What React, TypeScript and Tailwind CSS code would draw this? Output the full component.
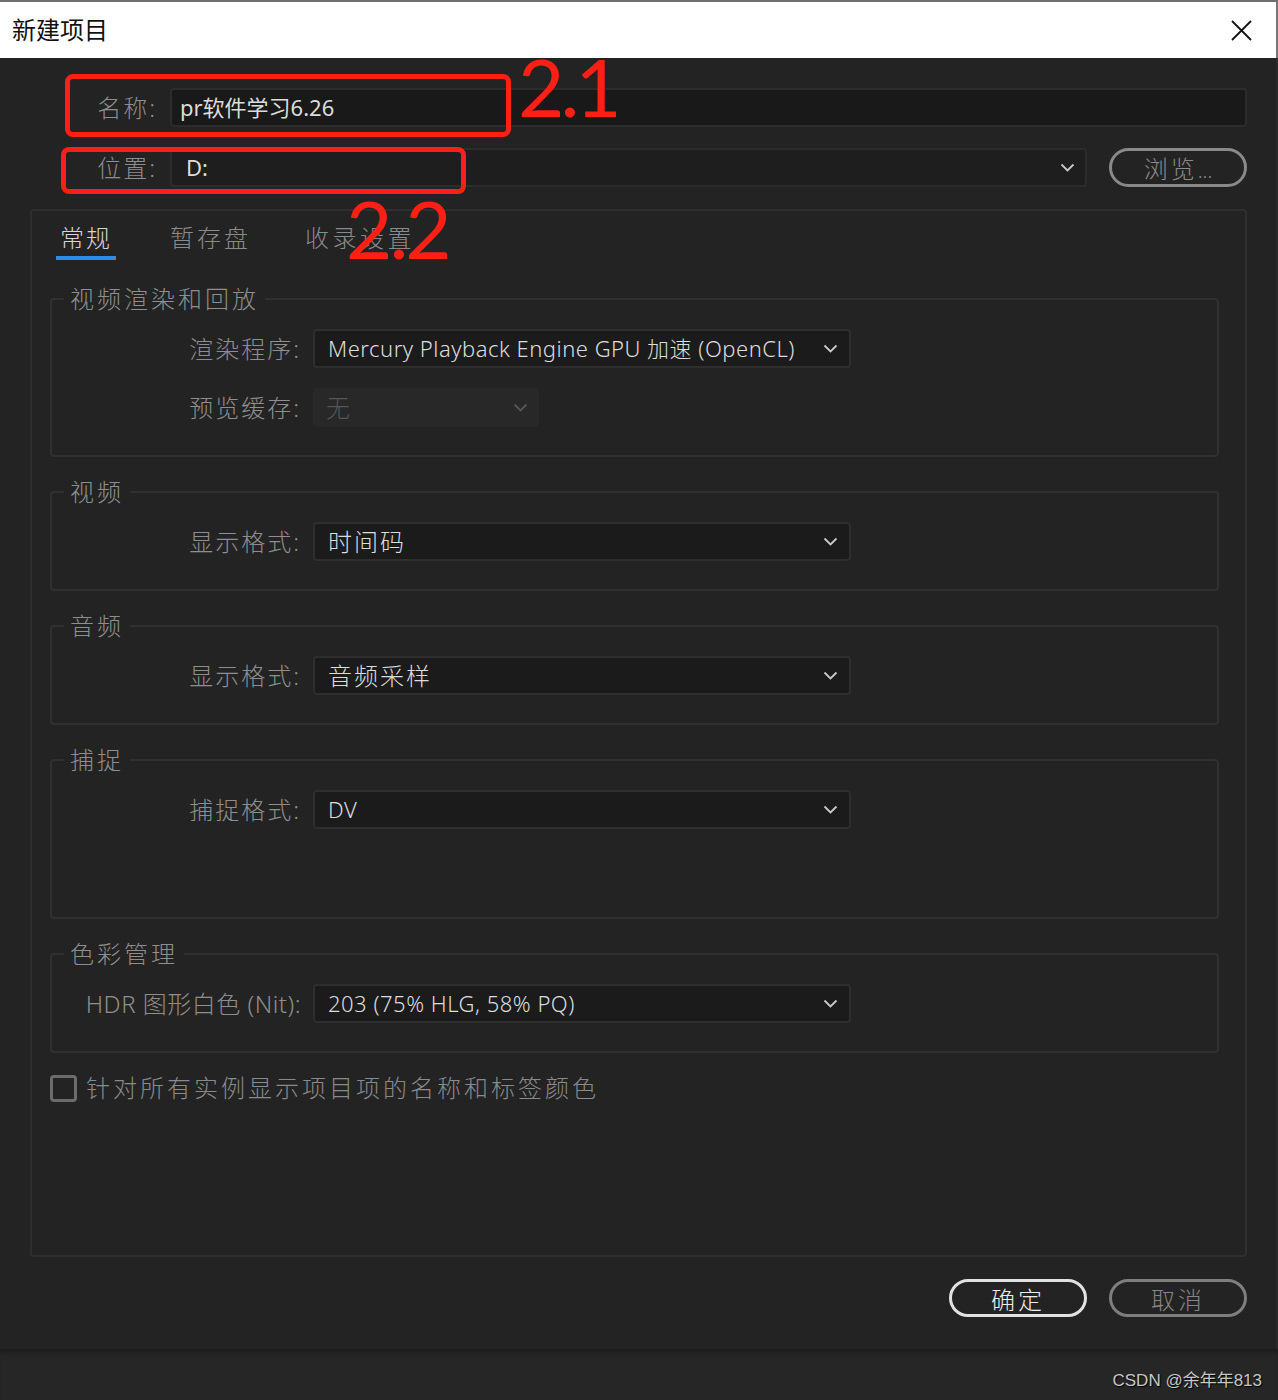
import React from "react";

const Chevron = ({ color = "#c9c9c9" }: { color?: string }) => (
  <svg width="15" height="9" viewBox="0 0 15 9" className="shrink-0">
    <path d="M1.5 1.5l6 6 6-6" fill="none" stroke={color} strokeWidth="1.8" />
  </svg>
);

const Select = ({
  value,
  disabled = false,
  latin = false,
  className = "w-[538px]",
}: {
  value: string;
  disabled?: boolean;
  latin?: boolean;
  className?: string;
}) => (
  <div
    className={`flex h-[39px] items-center justify-between rounded-[4px] pl-[13px] pr-[11px] ${className} ${
      disabled
        ? "bg-[#282828] text-[#555555]"
        : "border-2 border-[#2e2e2e] bg-[#1b1b1b] text-[#dcdcdc]"
    }`}
  >
    <span
      className={`whitespace-nowrap ${
        latin ? "text-[22px] tracking-[0.5px]" : "text-[24px] tracking-[2px]"
      }`}
    >
      {value}
    </span>
    <Chevron color={disabled ? "#555555" : "#c9c9c9"} />
  </div>
);

const Row = ({
  label,
  tight = false,
  children,
}: {
  label: string;
  tight?: boolean;
  children: React.ReactNode;
}) => (
  <div className="flex items-center">
    <div
      className={`w-[249px] whitespace-nowrap text-right text-[24px] text-[#8e8e8e] ${
        tight ? "tracking-[0.5px]" : "tracking-[2px]"
      }`}
    >
      {label}
    </div>
    <div className="ml-[12px]">{children}</div>
  </div>
);

const Group = ({
  title,
  pb = "pb-[28px]",
  children,
}: {
  title: string;
  pb?: string;
  children: React.ReactNode;
}) => (
  <fieldset className={`rounded-[4px] border-2 border-[#303030] pt-[16px] ${pb}`}>
    <legend className="ml-[12px] px-[6px] text-[24px] leading-[28px] tracking-[3px] text-[#8e8e8e]">
      {title}
    </legend>
    <div className="flex flex-col gap-[20px]">{children}</div>
  </fieldset>
);

export default function App() {
  return (
    <div className="relative flex h-[1400px] w-[1278px] flex-col bg-[#262626] font-['Noto_Sans','Noto_Sans_CJK_SC',sans-serif] font-light">
      <div className="h-[2px] bg-[#6f6f6f]" />
      <div className="flex h-[1347px]">
        <div className="flex w-[1276px] flex-col">
          {/* title bar */}
          <div className="flex h-[56px] items-center justify-between bg-white pl-[12px] pr-[24px]">
            <span className="text-[24px] font-normal text-[#111111]">新建项目</span>
            <svg width="21" height="21" viewBox="0 0 21 21">
              <path d="M1 1l19 19M20 1L1 20" stroke="#111111" strokeWidth="1.8" />
            </svg>
          </div>

          {/* body */}
          <div className="flex flex-1 flex-col bg-[#232323] pl-[30px] pr-[29px] pt-[30px]">
            <div className="flex h-[39px] items-center">
              <div className="w-[127px] text-right text-[24px] tracking-[2px] text-[#8e8e8e]">名称:</div>
              <div className="ml-[13px] flex h-full flex-1 items-center rounded-[4px] border-2 border-[#2c2c2c] bg-[#191919] pl-[8px] text-[22px] font-normal text-[#dcdcdc]">
                pr软件学习6.26
              </div>
            </div>

            <div className="mt-[21px] flex h-[39px] items-center">
              <div className="w-[127px] text-right text-[24px] tracking-[2px] text-[#8e8e8e]">位置:</div>
              <div className="ml-[13px] flex h-full flex-1 items-center justify-between rounded-[4px] border-2 border-[#2c2c2c] bg-[#1e1e1e] pl-[14px] pr-[10px] text-[22px] font-normal text-[#dcdcdc]">
                <span>D:</span>
                <Chevron />
              </div>
              <button className="ml-[22px] h-full w-[138px] rounded-full border-[3px] border-[#898989] text-[24px] text-[#8a8a8a]">
                <span className="tracking-[3px]">浏览</span>
                <span className="text-[20px]">...</span>
              </button>
            </div>

            {/* tab panel */}
            <div className="mt-[22px] flex h-[1048px] flex-col rounded-[4px] border-2 border-[#2e2e2e] pl-[18px] pr-[26px] pt-[13px]">
              <div className="ml-[6px] flex gap-[54px]">
                <div className="flex flex-col">
                  <span className="px-[4px] text-[24px] leading-[28px] tracking-[2px] text-[#d6d6d6]">常规</span>
                  <div className="mt-[4px] h-[4px] bg-[#2d8ceb]" />
                </div>
                <span className="text-[24px] leading-[28px] tracking-[3px] text-[#8a8a8a]">暂存盘</span>
                <span className="text-[24px] leading-[28px] tracking-[3.5px] text-[#8a8a8a]">收录设置</span>
              </div>

              <div className="mt-[25px] flex flex-col gap-[21px]">
                <Group title="视频渲染和回放">
                  <Row label="渲染程序:">
                    <Select value="Mercury Playback Engine GPU 加速 (OpenCL)" latin />
                  </Row>
                  <Row label="预览缓存:">
                    <Select value="无" disabled className="w-[226px]" />
                  </Row>
                </Group>
                <Group title="视频">
                  <Row label="显示格式:">
                    <Select value="时间码" />
                  </Row>
                </Group>
                <Group title="音频">
                  <Row label="显示格式:">
                    <Select value="音频采样" />
                  </Row>
                </Group>
                <Group title="捕捉" pb="pb-[88px]">
                  <Row label="捕捉格式:">
                    <Select value="DV" latin />
                  </Row>
                </Group>
                <Group title="色彩管理">
                  <Row label="HDR 图形白色 (Nit):" tight>
                    <Select value="203 (75% HLG, 58% PQ)" latin />
                  </Row>
                </Group>
              </div>

              <div className="mt-[17px] flex items-center">
                <div className="h-[27px] w-[27px] rounded-[4px] border-[3px] border-[#6c6c6c]" />
                <span className="ml-[9px] text-[24px] tracking-[3px] text-[#8a8a8a]">
                  针对所有实例显示项目项的名称和标签颜色
                </span>
              </div>
            </div>

            <div className="mt-[22px] flex justify-end gap-[22px]">
              <button className="h-[38px] w-[138px] rounded-full border-[3px] border-[#e2e2e2] text-[24px] tracking-[3px] text-[#ececec]">
                确定
              </button>
              <button className="h-[38px] w-[138px] rounded-full border-[3px] border-[#7e7e7e] text-[24px] tracking-[3px] text-[#858585]">
                取消
              </button>
            </div>
          </div>
        </div>
        <div className="flex w-[2px] flex-col">
          <div className="h-[56px] bg-[#777777]" />
          <div className="flex-1 bg-[#2a2a2a]" />
        </div>
      </div>

      {/* outer footer */}
      <div className="flex flex-1 items-center justify-end pr-[16px] pt-[13px] shadow-[inset_0_6px_6px_-4px_rgba(0,0,0,0.35)]">
        <span className="font-['Liberation_Sans','Noto_Sans_CJK_SC',sans-serif] text-[17px] font-normal text-[#c6c6c6] [text-shadow:1px_1px_1px_#000]">
          CSDN @余年年813
        </span>
      </div>

      {/* red annotations */}
      <div className="absolute left-[65px] top-[74px] h-[63px] w-[446px] rounded-[8px] border-[5px] border-[#ff1f14]" />
      <div className="absolute left-[61px] top-[147px] h-[47px] w-[405px] rounded-[8px] border-[5px] border-[#ff1f14]" />
      <span className="absolute left-[518px] top-[46px] font-['Lato',sans-serif] text-[80px] font-normal leading-none tracking-[-4px] text-[#ff1f14]">
        2.1
      </span>
      <span className="absolute left-[346px] top-[188px] font-['Lato',sans-serif] text-[80px] font-normal leading-none tracking-[-3px] text-[#ff1f14]">
        2.2
      </span>
    </div>
  );
}
